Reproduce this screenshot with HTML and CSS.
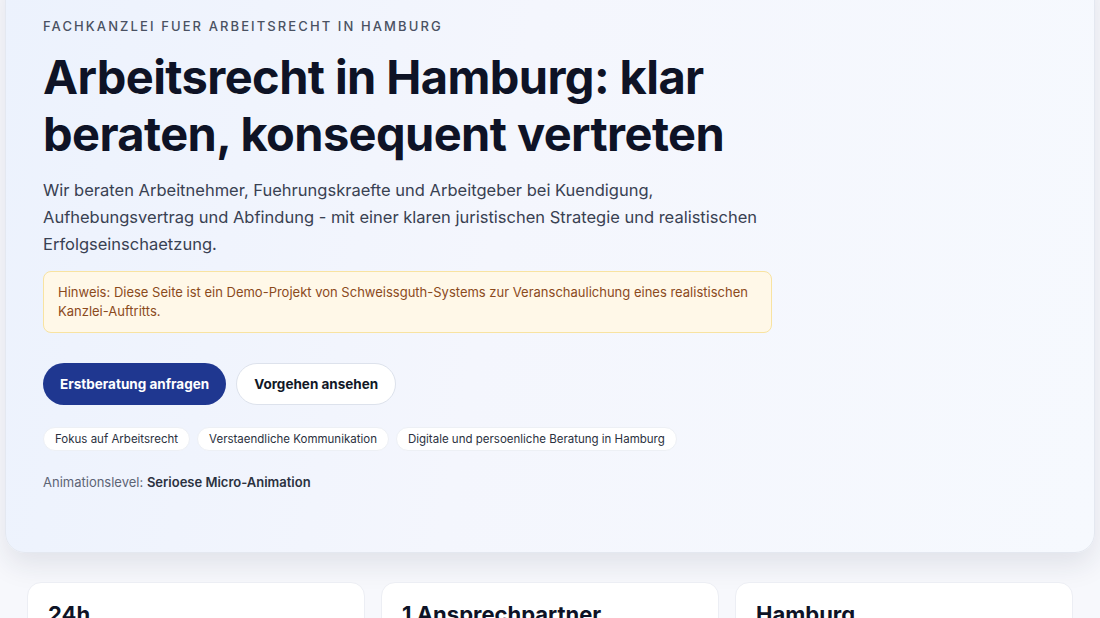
FILE: index.html
```html
<!DOCTYPE html>
<html lang="de">

<head>
  <meta charset="UTF-8" />
  <meta name="viewport" content="width=device-width, initial-scale=1.0" />
  <title>Arbeitsrecht in Hamburg</title>
  <link rel="stylesheet" href="styles.css">
</head>

<body>
  <div class="page">
    <!-- Hero-Bereich -->
    <section class="hero">
      <p class="eyebrow">Fachkanzlei fuer Arbeitsrecht in Hamburg</p>
      <h1>Arbeitsrecht in Hamburg: klar beraten, konsequent vertreten</h1>
      <p class="lead">Wir beraten Arbeitnehmer, Fuehrungskraefte und Arbeitgeber bei Kuendigung, Aufhebungsvertrag und Abfindung - mit einer klaren juristischen Strategie und realistischen Erfolgseinschaetzung.</p>

      <div class="notice">Hinweis: Diese Seite ist ein Demo-Projekt von Schweissguth-Systems zur Veranschaulichung eines realistischen Kanzlei-Auftritts.</div>

      <div class="actions">
        <a class="btn btn-primary" href="#kontakt">Erstberatung anfragen</a>
        <a class="btn btn-ghost" href="#vorgehen">Vorgehen ansehen</a>
      </div>

      <ul class="tags">
        <li>Fokus auf Arbeitsrecht</li>
        <li>Verstaendliche Kommunikation</li>
        <li>Digitale und persoenliche Beratung in Hamburg</li>
      </ul>

      <p class="anim-level">Animationslevel: <strong>Serioese Micro-Animation</strong></p>
    </section>

    <!-- Kennzahlen -->
    <section class="facts">
      <div class="fact">
        <h3>24h</h3>
        <p>Rueckmeldung auf neue Anfragen</p>
      </div>
      <div class="fact">
        <h3>1 Ansprechpartner</h3>
        <p>Vom ersten Gespraech bis zum Abschluss</p>
      </div>
      <div class="fact">
        <h3>Hamburg</h3>
        <p>Beratung vor Ort und digital</p>
      </div>
    </section>
  </div>
</body>

</html>
```

FILE: styles.css
```css
* {
  margin: 0;
  padding: 0;
  box-sizing: border-box;
}

ul {
  list-style: none;
}

body {
  background: #f7f8fc;
  font-family: Inter, "Noto Sans", sans-serif;
  color: #0f1428;
  overflow: hidden;
}

.page {
  padding: 0 5px;
}

/* Hero-Karte, oben aus dem Bild gescrollt */
.hero {
  margin-top: -35px;
  padding: 50px 37px 62px;
  border: 1px solid #e4e8f0;
  border-radius: 20px;
  background: linear-gradient(100deg, #ecf2fd 0%, #f4f6fd 45%, #f6f9fe 100%);
  box-shadow: 0 12px 28px rgba(30, 41, 70, 0.10);
}

.eyebrow {
  font-size: 13px;
  font-weight: 500;
  letter-spacing: 2.1px;
  text-transform: uppercase;
  color: #4a5162;
  line-height: 20px;
}

.hero h1 {
  margin-top: 12px;
  max-width: 720px;
  font-size: 47px;
  line-height: 57px;
  font-weight: 700;
  letter-spacing: -0.6px;
  color: #0e1326;
}

.lead {
  margin-top: 15px;
  max-width: 730px;
  font-size: 16.5px;
  line-height: 27px;
  color: #394152;
}

.notice {
  margin-top: 13px;
  width: 729px;
  padding: 11px 14px;
  background: #fff8e8;
  border: 1px solid #f8e3a1;
  border-radius: 8px;
  font-size: 13px;
  line-height: 19px;
  color: #8b4a1c;
}

.actions {
  display: flex;
  gap: 10px;
  margin-top: 30px;
}

.btn {
  display: inline-flex;
  align-items: center;
  height: 42px;
  padding: 0 17px;
  border-radius: 21px;
  font-size: 13.5px;
  font-weight: 700;
  text-decoration: none;
}

.btn-primary {
  background: #1f3790;
  color: #fff;
}

.btn-ghost {
  background: #fff;
  border: 1px solid #dde2ec;
  color: #111827;
}

.tags {
  display: flex;
  gap: 7px;
  margin-top: 22px;
}

.tags li {
  height: 24px;
  padding: 0 11px;
  display: flex;
  align-items: center;
  background: #fff;
  border: 1px solid #edf0f5;
  border-radius: 12px;
  font-size: 11.5px;
  color: #2b3140;
}

.anim-level {
  margin-top: 23px;
  font-size: 13px;
  color: #5d6475;
}

.anim-level strong {
  color: #2b3140;
  font-weight: 600;
}

/* Kennzahlen-Karten */
.facts {
  display: grid;
  grid-template-columns: repeat(3, 1fr);
  gap: 16px;
  margin: 29px 22px 0;
}

.fact {
  background: #fff;
  border: 1px solid #eceef4;
  border-radius: 14px;
  padding: 18px 20px 24px;
}

.fact h3 {
  font-size: 22px;
  font-weight: 700;
  color: #0e1326;
}

.fact p {
  margin-top: 6px;
  font-size: 14px;
  color: #5d6475;
}
```
